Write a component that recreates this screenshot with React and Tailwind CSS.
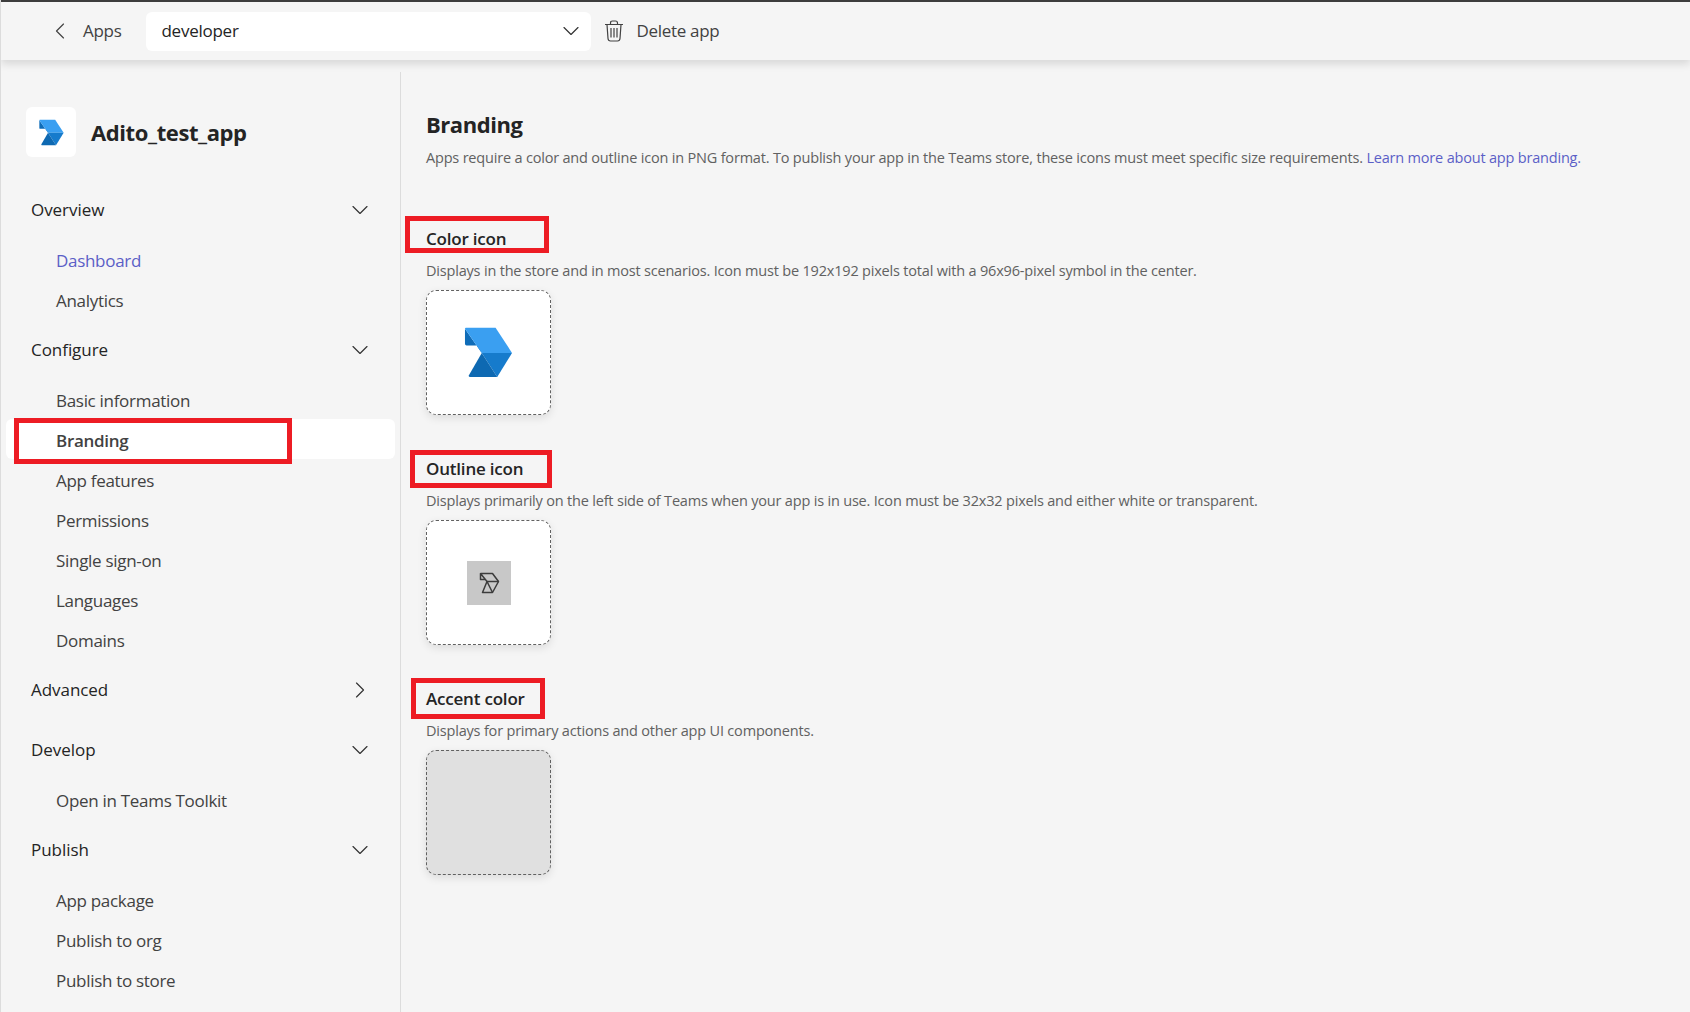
import React from 'react';
import { ChevronDown, ChevronRight, ChevronLeft } from 'lucide-react';

const NAV = [
  { label: 'Overview', open: true, items: ['Dashboard', 'Analytics'] },
  { label: 'Configure', open: true, items: ['Basic information', 'Branding', 'App features', 'Permissions', 'Single sign-on', 'Languages', 'Domains'] },
  { label: 'Advanced', open: false, items: [] },
  { label: 'Develop', open: true, items: ['Open in Teams Toolkit'] },
  { label: 'Publish', open: true, items: ['App package', 'Publish to org', 'Publish to store'] },
];

function Logo({ className }) {
  return (
    <svg viewBox="190 381 147 155" className={className}>
      <path d="M192 386 L192 432 Q192 437 197 437 L240 437 L243 460 Z" fill="#0f6cb8" />
      <path d="M195 383 L285 383 L335 460 L243 460 L192 386 Q192 383 195 383 Z" fill="#3a9ff1" />
      <path d="M243 460 L335 460 L290 533 Z" fill="#167bcc" />
      <path d="M243 460 L290 533 L207 533 Q202 533 204 528 Z" fill="#0e69b2" />
    </svg>
  );
}

function OutlineLogo() {
  return (
    <svg viewBox="16 11 44 44" className="w-11 h-11" fill="none" stroke="#3c3c3c" strokeWidth="1.5" strokeLinejoin="round">
      <path d="M29.5 23.5 L41.5 23.5 L47.5 31.5 L41.5 42.5 L31.5 42.5 L36 31.5 L29.5 23.5 L29.5 29.5 L34.5 29.5" />
      <path d="M36 31.5 L47.5 31.5 M36 31.5 L41.5 42.5" />
    </svg>
  );
}

function TrashIcon() {
  return (
    <svg viewBox="0 0 20 22" className="w-[20px] h-[22px]" fill="none" stroke="#424242" strokeWidth="1.2">
      <path d="M1 4.5 H19 M6.5 4.5 V3 Q6.5 1 8.5 1 H11.5 Q13.5 1 13.5 3 V4.5" />
      <path d="M3 4.5 L4 18.5 Q4.2 21 6.5 21 H13.5 Q15.8 21 16 18.5 L17 4.5" />
      <path d="M7 8 V17.5 M10 8 V17.5 M13 8 V17.5" />
    </svg>
  );
}

function NavGroup({ group }) {
  const Chevron = group.open ? ChevronDown : ChevronRight;
  return (
    <div>
      <div className="h-[60px] pt-[2px] flex items-center justify-between pl-[25px] pr-[21px]">
        <span className="text-[17px] font-medium text-[#242424] tracking-[-0.05px]">{group.label}</span>
        <Chevron size={28} strokeWidth={1} className="text-[#333]" />
      </div>
      {group.items.map((item) => {
        const active = item === 'Branding';
        const link = item === 'Dashboard';
        return (
          <div
            key={item}
            className={`relative h-10 pt-[4px] flex items-center pl-[50px] rounded-md text-[17px] tracking-[-0.3px] ${active ? 'bg-white font-semibold text-[#424242]' : ''} ${link ? 'text-[#5b5fc7]' : ''} ${!active && !link ? 'text-[#424242]' : ''}`}
          >
            {item}
            {active && <div className="absolute left-[8px] -top-[1px] w-[278px] h-[46px] border-[5px] border-[#ed1c24]" />}
          </div>
        );
      })}
    </div>
  );
}

function Section({ title, desc, tileClass, children, box }) {
  return (
    <section className="flex flex-col">
      <div className="relative h-[24px] flex items-center">
        <h2 className="text-[17px] font-semibold text-[#242424] tracking-[-0.2px]">{title}</h2>
        <div className={`absolute border-[5px] border-[#ed1c24] ${box}`} />
      </div>
      <p className="mt-[8px] h-[24px] flex items-center text-[14.5px] text-[#616161] tracking-[-0.19px]">{desc}</p>
      <div className={`mt-[7px] w-[125px] h-[125px] rounded-[10px] border border-dashed border-[#616161] shadow-[0_3px_8px_rgba(0,0,0,0.1)] flex items-center justify-center ${tileClass}`}>
        {children}
      </div>
    </section>
  );
}

export default function App() {
  return (
    <div className="h-screen overflow-hidden bg-[#f5f5f5] border-l border-[#dcdcdc] font-['Open_Sans',sans-serif] text-[#242424]">
      {/* Top bar */}
      <header className="h-[60px] border-t-2 border-[#3d3d3d] bg-[#f5f5f5] shadow-[0_4px_8px_rgba(0,0,0,0.12)] flex items-center pl-[45px]">
        <ChevronLeft size={28} strokeWidth={1} className="text-[#424242]" />
        <span className="ml-[9px] text-[17px] text-[#424242] tracking-[-0.3px]">Apps</span>
        <div className="ml-[25px] w-[445px] h-[39px] bg-white rounded-md flex items-center justify-between pl-[15px] pr-[6px]">
          <span className="text-[17px] text-[#242424] tracking-[-0.25px]">developer</span>
          <ChevronDown size={28} strokeWidth={1} className="text-[#333]" />
        </div>
        <div className="ml-[13px]"><TrashIcon /></div>
        <span className="ml-[12px] text-[17px] text-[#424242] tracking-[-0.3px]">Delete app</span>
      </header>

      <div className="flex">
        {/* Sidebar */}
        <aside className="w-[399px] pl-[5px] pr-[5px] flex-none">
          <div className="mt-[47px] ml-[20px] h-[50px] flex items-center gap-[15px]">
            <div className="w-[50px] h-[50px] bg-white rounded-md flex items-center justify-center">
              <Logo className="w-[25px] h-[27px]" />
            </div>
            <span className="mt-[1px] text-[22px] font-bold tracking-[-0.4px] text-[#242424]">Adito_test_app</span>
          </div>
          <nav className="mt-[22px]">
            {NAV.map((g) => <NavGroup key={g.label} group={g} />)}
          </nav>
        </aside>

        {/* Main */}
        <main className="mt-[12px] pl-[25px] border-l border-[#dcdcdc] flex-1 h-[940px]">
          <h1 className="mt-[37px] text-[22px] font-bold text-[#242424] tracking-[-0.45px] leading-[30px]">Branding</h1>
          <p className="mt-[7px] text-[14.5px] leading-[24px] text-[#616161] tracking-[-0.19px]">
            Apps require a color and outline icon in PNG format. To publish your app in the Teams store, these icons must meet specific size requirements.{' '}
            <span className="text-[#5b5fc7]">Learn more about app branding.</span>
          </p>
          <div className="mt-[57px] flex flex-col gap-[42px]">
            <Section
              title="Color icon"
              desc="Displays in the store and in most scenarios. Icon must be 192x192 pixels total with a 96x96-pixel symbol in the center."
              tileClass="bg-white"
              box="-left-[21px] -top-[11px] w-[144px] h-[37px]"
            >
              <Logo className="w-[49px] h-[51px]" />
            </Section>
            <Section
              title="Outline icon"
              desc="Displays primarily on the left side of Teams when your app is in use. Icon must be 32x32 pixels and either white or transparent."
              tileClass="bg-white"
              box="-left-[16px] -top-[7px] w-[142px] h-[38px]"
            >
              <div className="w-[44px] h-[44px] bg-[#c8c8c8] flex items-center justify-center"><OutlineLogo /></div>
            </Section>
            <Section
              title="Accent color"
              desc="Displays for primary actions and other app UI components."
              tileClass="bg-[#e0e0e0]"
              box="-left-[15px] -top-[9px] w-[134px] h-[41px]"
            />
          </div>
        </main>
      </div>
    </div>
  );
}
